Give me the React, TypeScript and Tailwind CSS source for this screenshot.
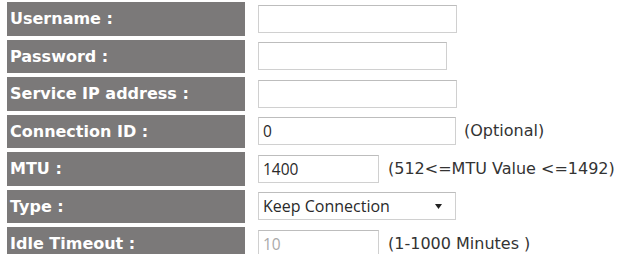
import React from "react";

type Row = {
  label: string;
  kind: "text" | "select";
  value?: string;
  width: string;
  disabled?: boolean;
  hint?: string;
  hintGap?: string;
};

const ROWS: Row[] = [
  { label: "Username :", kind: "text", width: "w-[199px]" },
  { label: "Password :", kind: "text", width: "w-[189px]" },
  { label: "Service IP address :", kind: "text", width: "w-[199px]" },
  { label: "Connection ID :", kind: "text", value: "0", width: "w-[198px]", hint: "(Optional)", hintGap: "ml-[8px]" },
  { label: "MTU :", kind: "text", value: "1400", width: "w-[121px]", hint: "(512<=MTU Value <=1492)", hintGap: "ml-[9px]" },
  { label: "Type :", kind: "select", value: "Keep Connection", width: "w-[198px]" },
  { label: "Idle Timeout :", kind: "text", value: "10", width: "w-[121px]", disabled: true, hint: "(1-1000 Minutes )", hintGap: "ml-[9px]" },
];

export default function App() {
  return (
    <div className="h-[254px] w-[618px] overflow-hidden bg-white pl-[7px] pt-[2px]">
      <div className="flex flex-col gap-[4px]">
        {ROWS.map((row) => (
          <div key={row.label} className="flex h-[33.5px] items-center">
            <div className="flex h-full w-[238px] shrink-0 items-center bg-[#7b7979] pl-[3px] pt-[1px] font-['DejaVu_Sans',Verdana,sans-serif] text-[16px] font-bold text-white">
              {row.label}
            </div>
            <div className="ml-[13px] flex items-center">
              {row.kind === "select" ? (
                <div
                  className={`${row.width} flex h-[28px] items-center justify-between border border-[#d0d0d0] border-t-[#bdbdbd] bg-white pl-[4px] pr-[13px] font-['Open_Sans',Arial,sans-serif] text-[16px] text-[#2a2a2a]`}
                >
                  <span>{row.value}</span>
                  <svg width="7" height="5" viewBox="0 0 7 5">
                    <path d="M0 0 H7 L3.5 5 Z" fill="#222" />
                  </svg>
                </div>
              ) : (
                <input
                  readOnly
                  value={row.value ?? ""}
                  disabled={row.disabled}
                  className={`${row.width} h-[28px] border border-[#d0d0d0] border-t-[#bdbdbd] bg-white px-[4px] font-['Open_Sans',Arial,sans-serif] text-[15.5px] text-[#2a2a2a] outline-none disabled:text-[#aaa]`}
                />
              )}
              {row.hint && (
                <span className={`${row.hintGap} whitespace-nowrap font-['DejaVu_Sans',Verdana,sans-serif] text-[16px] text-[#333]`}>
                  {row.hint}
                </span>
              )}
            </div>
          </div>
        ))}
      </div>
    </div>
  );
}
